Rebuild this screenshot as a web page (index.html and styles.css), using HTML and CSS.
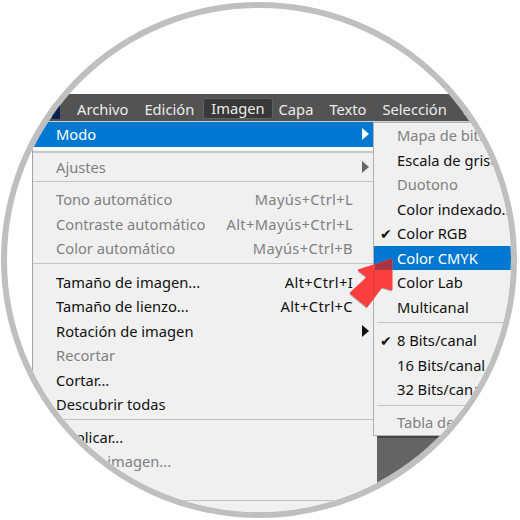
FILE: index.html
```html
<!DOCTYPE html>
<html lang="es">
<head>
<meta charset="utf-8">
<title>Imagen - Modo</title>
<link rel="stylesheet" href="styles.css">
</head>
<body>
<div class="lens">
  <div class="bar">
    <span class="logo"></span>
    <span class="bar-item">Archivo</span>
    <span class="bar-item">Edición</span>
    <span class="bar-item active">Imagen</span>
    <span class="bar-item">Capa</span>
    <span class="bar-item">Texto</span>
    <span class="bar-item">Selección</span>
    <span class="bar-item">Filtro</span>
  </div>
  <div class="work">
    <div class="menu">
      <div class="row hot"><span>Modo</span><i class="tri"></i></div>
      <div class="gap"></div>
      <hr class="thick">
      <div class="row off"><span>Ajustes</span><i class="tri"></i></div>
      <hr>
      <div class="row off"><span>Tono automático</span><em>Mayús+Ctrl+L</em></div>
      <div class="row off"><span>Contraste automático</span><em>Alt+Mayús+Ctrl+L</em></div>
      <div class="row off"><span>Color automático</span><em>Mayús+Ctrl+B</em></div>
      <hr class="wide">
      <div class="row"><span>Tamaño de imagen...</span><em>Alt+Ctrl+I</em></div>
      <div class="row"><span>Tamaño de lienzo...</span><em>Alt+Ctrl+C</em></div>
      <div class="row"><span>Rotación de imagen</span><i class="tri dark"></i></div>
      <div class="row off"><span>Recortar</span></div>
      <div class="row"><span>Cortar...</span></div>
      <div class="row"><span>Descubrir todas</span></div>
      <hr>
      <div class="row"><span>Duplicar...</span></div>
      <div class="row off"><span>Aplicar imagen...</span></div>
      <div class="row off"><span>Operaciones...</span></div>
      <hr>
    </div>
    <div class="canvas"></div>
    <div class="menu sub">
      <div class="row off"><span>Mapa de bits...</span></div>
      <div class="row"><span>Escala de grises</span></div>
      <div class="row off"><span>Duotono</span></div>
      <div class="row"><span>Color indexado...</span></div>
      <div class="row"><b class="check">✔</b><span>Color RGB</span></div>
      <div class="row hot"><span>Color CMYK</span></div>
      <div class="row"><span>Color Lab</span></div>
      <div class="row"><span>Multicanal</span></div>
      <hr class="wide">
      <div class="row"><b class="check">✔</b><span>8 Bits/canal</span></div>
      <div class="row"><span>16 Bits/canal</span></div>
      <div class="row"><span>32 Bits/canal</span></div>
      <hr>
      <div class="row off"><span>Tabla de colores...</span></div>
    </div>
    <svg class="pointer" width="60" height="60" viewBox="0 0 60 60" aria-hidden="true">
      <polygon points="43,1 9,12 18,19 1,35 18,49 33,29 43,32" fill="#5a4040" opacity=".45" transform="translate(-.5 1.5)"/>
      <polygon points="43,1 9,12 18,19 1,35 18,49 33,29 43,32" fill="#fb3e3e" stroke="#fb3e3e" stroke-width="1" stroke-linejoin="round"/>
      <polygon points="43,1 26,6.5 26,12 43,12" fill="#a93340"/>
      <line x1="25" y1="12" x2="25" y2="37" stroke="#d83a3c" stroke-width="1"/>
    </svg>
  </div>
</div>
</body>
</html>
```
FILE: styles.css
```css
* { box-sizing: border-box; }
html, body { margin: 0; padding: 0; background: #fff; }
body { width: 520px; height: 520px; padding: 2px 0 0 1px; overflow: hidden; font-family: "Noto Sans", "Open Sans", sans-serif; font-size: 14.7px; }
.lens { width: 516px; height: 516px; border: 6px solid #bfbfbf; border-radius: 50%; overflow: hidden; padding-top: 86px; background: #fff; position: relative; }
.bar { height: 28px; margin-left: 33px; background: #535353; border-bottom: 1px solid #d0d0d0; display: flex; align-items: center; color: #ececec; white-space: nowrap; padding-top: 2px; }
.logo { width: 8px; height: 14px; margin: 6px 9px 0 12px; background: #0b2350; flex: none; }
.bar-item { padding: 0 8px; height: 21px; line-height: 22px; flex: none; }
.active { background: #383838; border: 1px solid #606060; border-radius: 3px; padding: 0 7px; margin: 0 -2px 0 1px; line-height: 19px; }
.work { display: flex; margin-left: 25px; position: relative; height: 400px; }
.menu { width: 345px; flex: none; background: #f0f0f0; border-left: 1px solid #a0a0a0; color: #111; }
.canvas { flex: 1; background: #646464; border-top: 2px solid #444; margin-top: 314px; }
.row { height: 24.5px; padding: 0 4px 0 23px; display: flex; align-items: center; justify-content: space-between; white-space: nowrap; position: relative; }
.row em { font-style: normal; margin-right: 20px; letter-spacing: .35px; }
.hot { background: #0078d2; color: #fff; }
.off { color: #808080; }
.gap { height: 3px; background: #fff; }
hr { border: 0; height: 1px; background: #c4c4c4; margin: 2px 0 5px; }
hr.thick { height: 2px; background: #c8c8c8; margin: 1px 0 2px; }
hr.wide { margin: 2px 0 6px; }
.tri { width: 0; height: 0; flex: none; border-left: 7px solid #666; border-top: 6.5px solid transparent; border-bottom: 6.5px solid transparent; margin-right: 4px; }
.hot .tri { border-left-color: #fff; }
.tri.dark { border-left-color: #111; }
.sub { position: absolute; left: 341px; top: 0; width: 180px; height: 314px; border: 1px solid #b0b0b0; }
.check { position: absolute; left: 6px; font-size: 14px; font-weight: 400; color: #111; }
.sub hr { margin: 3px 0 4px 3px; }
.sub hr.wide { margin: 3px 0 5px 3px; }
.pointer { position: absolute; left: 317px; top: 136px; overflow: visible; }
```
